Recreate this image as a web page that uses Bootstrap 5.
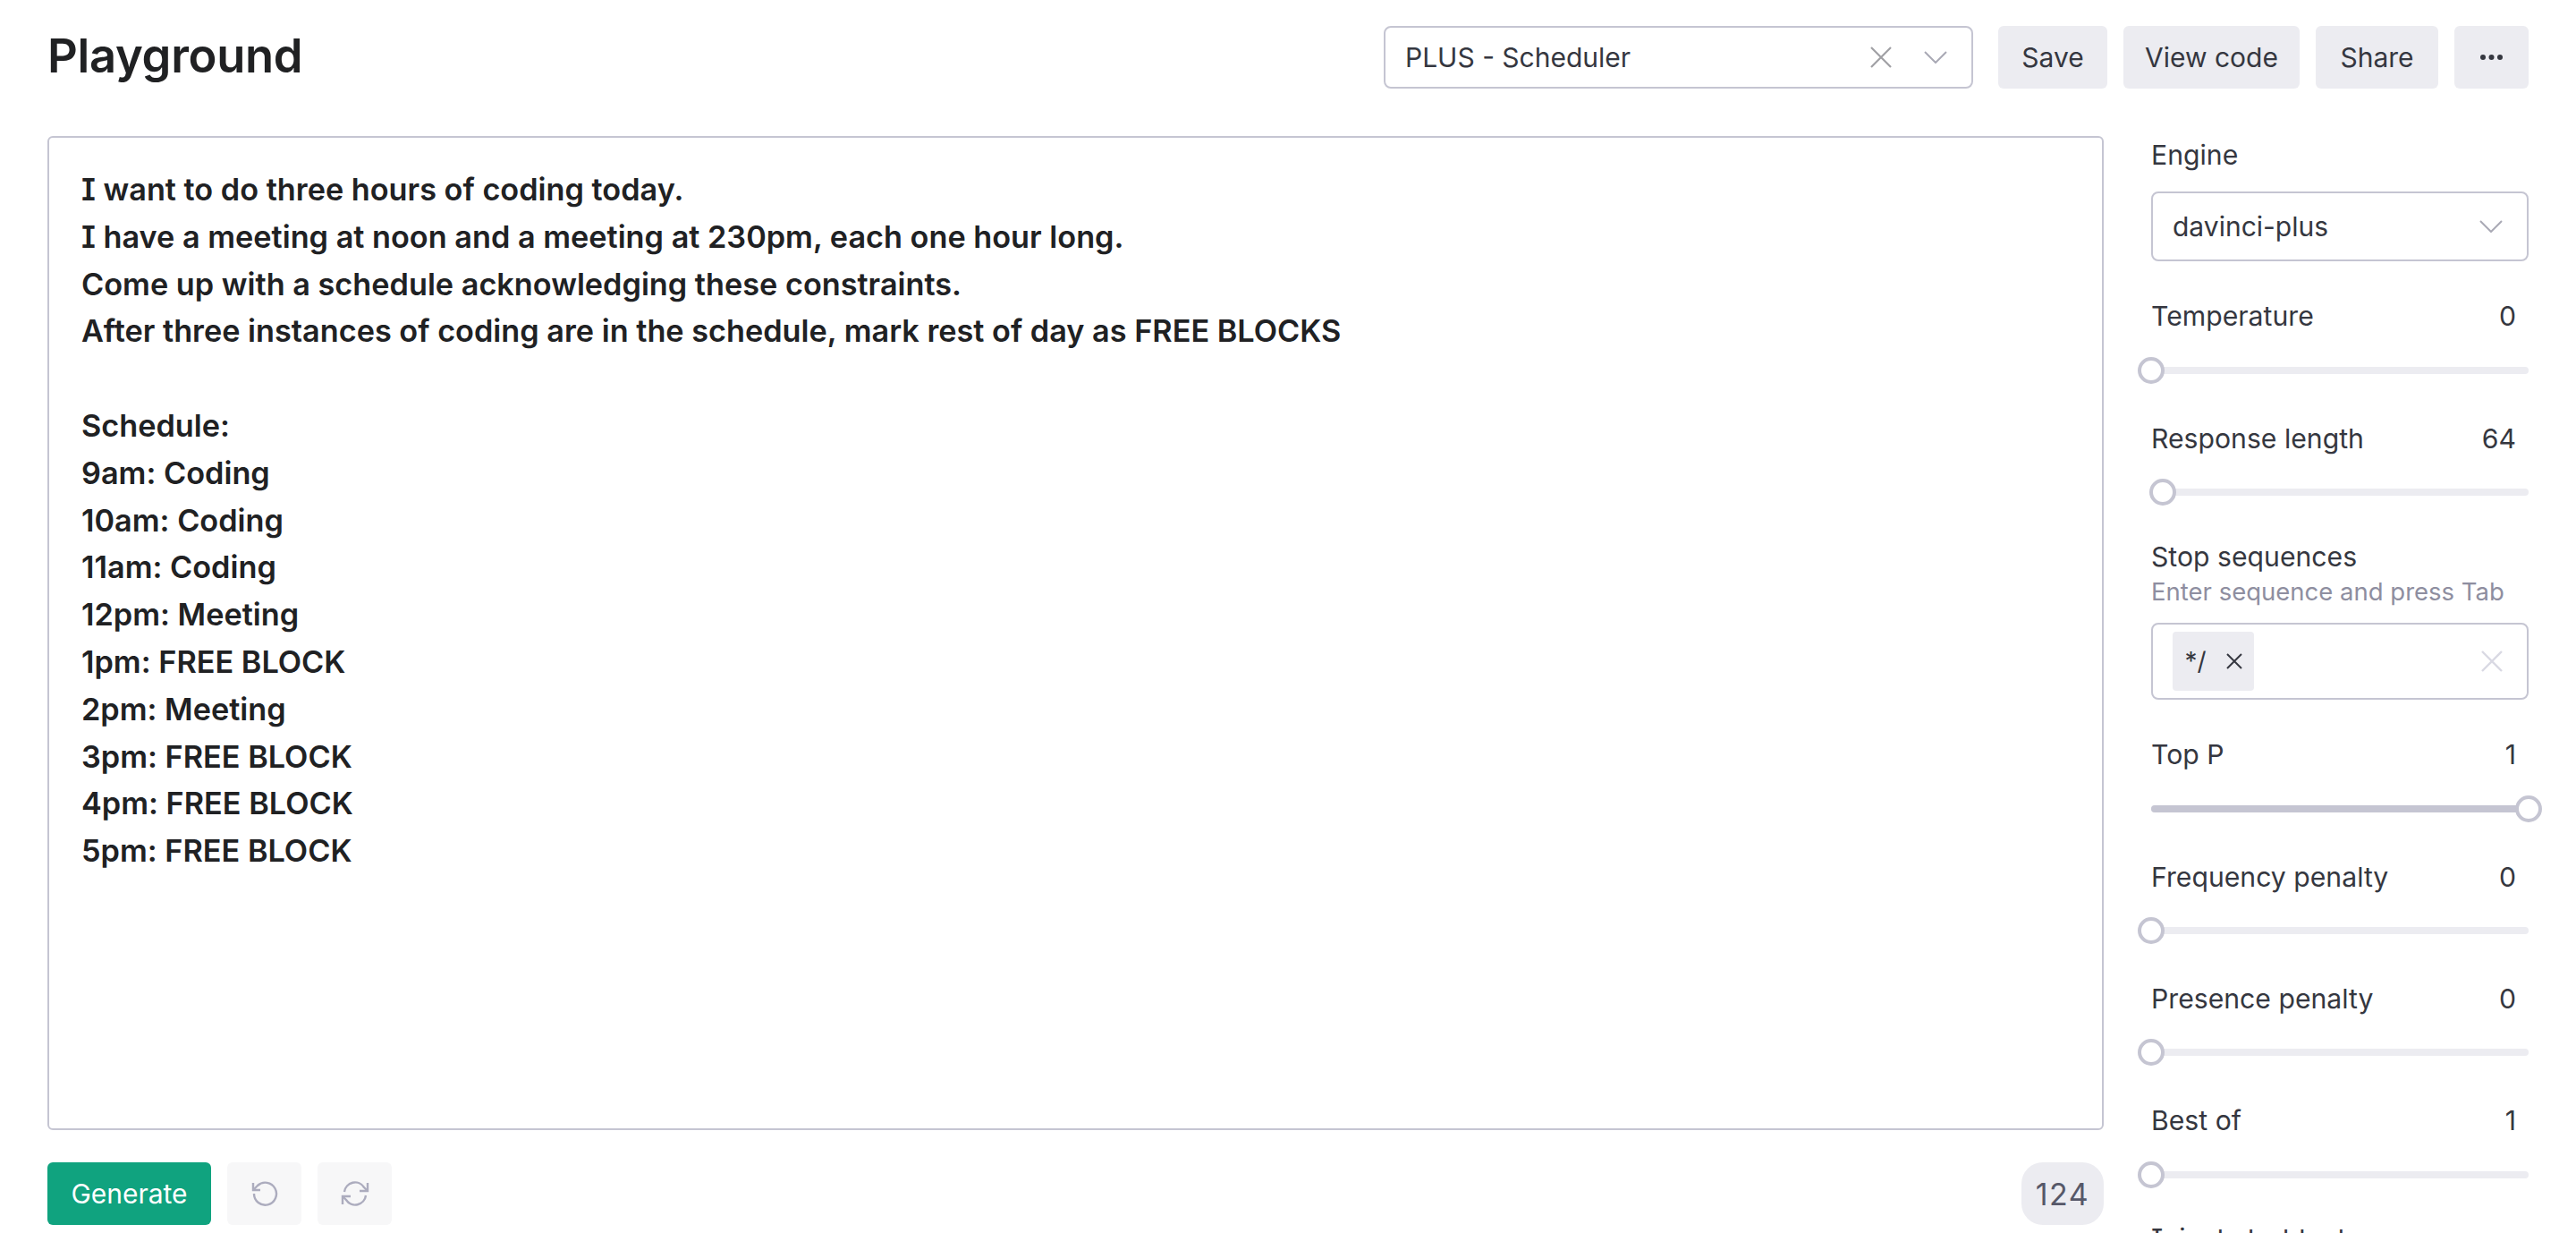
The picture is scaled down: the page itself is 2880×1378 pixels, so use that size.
<!DOCTYPE html>
<html lang="en">
<head>
    <meta charset="UTF-8">
    <meta name="viewport" content="width=device-width, initial-scale=1.0">
    <title>Playground</title>
    <link href="https://cdn.jsdelivr.net/npm/bootstrap@5.3.0/dist/css/bootstrap.min.css" rel="stylesheet">

    <style>
        html, body {
            height: 1378px;
            overflow: hidden;
        }
        body {
            font-family: Inter, "Noto Sans", sans-serif;
            font-feature-settings: "cv08";
            color: #353740;
            background-color: #fff;
        }
        .page-wrap {
            padding: 29px 53px 0 53px;
        }
        .page-title {
            font-size: 52.5px;
            font-weight: 600;
            line-height: 67px;
            margin: 0 0 3px 0;
            color: #202123;
            letter-spacing: -0.3px;
        }
        .head-bar {
            height: 70px;
            margin-bottom: 53px;
        }
        .head-actions {
            gap: 18px;
        }
        .field-box {
            border: 2px solid #c5c5d2;
            border-radius: 8px;
            background: #fff;
            font-size: 30px;
            padding: 0 27px 0 22px;
        }
        .preset-select {
            width: 659px;
            height: 70px;
            margin-right: 10px;
        }
        .preset-icons {
            gap: 36px;
        }
        .grey-btn {
            background: #ececf1;
            color: #353740;
            border: 0;
            border-radius: 6px;
            height: 70px;
            font-size: 30px;
            padding: 0;
        }
        .grey-btn:hover {
            background: #d9d9e3;
        }
        .btn-save { width: 122px; }
        .btn-view { width: 197px; }
        .btn-share { width: 137px; }
        .btn-more { width: 83px; }
        .main-row {
            gap: 53px;
        }
        .left-col {
            width: 2299px;
        }
        .editor-box {
            width: 2299px;
            height: 1111px;
            border: 2px solid #c5c5d2;
            border-radius: 6px;
            padding: 32px 36px;
            font-size: 34.25px;
            font-weight: 600;
            line-height: 52.8px;
            color: #202123;
            white-space: pre-line;
        }
        .foot-bar {
            margin-top: 36px;
            height: 70px;
            gap: 18px;
        }
        .btn-generate {
            background: #10a37f;
            color: #fff;
            border: 0;
            border-radius: 6px;
            width: 183px;
            height: 70px;
            font-size: 30px;
            padding: 0;
        }
        .btn-generate:hover {
            background: #0e8e6f;
            color: #fff;
        }
        .btn-hist {
            background: #f7f7f8;
            border: 0;
            border-radius: 6px;
            width: 83px;
            height: 70px;
            padding: 0;
        }
        .token-pill {
            background: #ececf1;
            color: #565869;
            border-radius: 24px;
            width: 92px;
            height: 70px;
            font-size: 34px;
            letter-spacing: 1.5px;
        }
        .side-col {
            width: 422px;
            font-size: 30.2px;
        }
        .side-label {
            line-height: 40px;
            margin-top: 52px;
        }
        .side-label.engine-label {
            margin-top: 1px;
        }
        .side-label.temp-label {
            margin-top: 41px;
        }
        .side-label.stop-label {
            margin-top: 48px;
        }
        .side-label.topp-label {
            margin-top: 41px;
        }
        .side-label.inject-label {
            margin-top: 47px;
        }
        .side-value {
            padding-right: 14px;
        }
        .engine-select {
            height: 78px;
            margin-top: 21px;
        }
        .slider-track {
            position: relative;
            height: 8px;
            border-radius: 4px;
            background: #ececf1;
            margin-top: 36px;
        }
        .slider-track.track-low {
            margin-top: 37px;
        }
        .slider-fill {
            height: 8px;
            border-radius: 4px;
            background: #c5c5d2;
        }
        .slider-thumb {
            position: absolute;
            top: -11px;
            width: 30px;
            height: 30px;
            margin-left: -15px;
            border: 4px solid #c5c5d2;
            border-radius: 50%;
            background: #fff;
        }
        .hint-text {
            font-size: 27.5px;
            color: #8e8ea0;
            line-height: 32px;
            margin-top: 3px;
        }
        .stop-box {
            height: 86px;
            margin-top: 19px;
        }
        .stop-tag {
            background: #ececf1;
            border-radius: 4px;
            height: 66px;
            width: 91px;
            font-size: 28px;
            gap: 22px;
        }
    </style>
</head>
<body>

<div class="page-wrap">
    <div class="head-bar d-flex align-items-center justify-content-between">
        <h1 class="page-title">Playground</h1>
        <div class="head-actions d-flex align-items-center">
            <div class="field-box preset-select d-flex align-items-center justify-content-between">
                <span>PLUS - Scheduler</span>
                <span class="preset-icons d-flex align-items-center">
                    <svg width="24" height="24" viewBox="0 0 24 24" fill="none" stroke="#a0a0a4" stroke-width="2.2"><path d="M1 1l22 22M23 1L1 23"/></svg>
                    <svg width="26" height="14" viewBox="0 0 26 14" fill="none" stroke="#a9a9b5" stroke-width="2"><path d="M1 1l12 12L25 1"/></svg>
                </span>
            </div>
            <button class="btn grey-btn btn-save">Save</button>
            <button class="btn grey-btn btn-view">View code</button>
            <button class="btn grey-btn btn-share">Share</button>
            <button class="btn grey-btn btn-more d-flex align-items-center justify-content-center">
                <svg width="25" height="8" viewBox="0 0 25 8" fill="#353740"><circle cx="3" cy="4" r="3"/><circle cx="12.5" cy="4" r="3"/><circle cx="22" cy="4" r="3"/></svg>
            </button>
        </div>
    </div>

    <div class="main-row d-flex align-items-start">
        <div class="left-col">
            <div class="editor-box">I want to do three hours of coding today.
I have a meeting at noon and a meeting at 230pm, each one hour long.
Come up with a schedule acknowledging these constraints.
After three instances of coding are in the schedule, mark rest of day as FREE BLOCKS

Schedule:
9am: Coding
10am: Coding
11am: Coding
12pm: Meeting
1pm: FREE BLOCK
2pm: Meeting
3pm: FREE BLOCK
4pm: FREE BLOCK
5pm: FREE BLOCK</div>
            <div class="foot-bar d-flex align-items-center">
                <button class="btn btn-generate">Generate</button>
                <button class="btn btn-hist d-flex align-items-center justify-content-center">
                    <svg width="30" height="28" viewBox="0 0 30 28" fill="none" stroke="#acacbe" stroke-width="2.4"><path d="M3 14A12.5 12.5 0 1 0 7 5L3 9"/><path d="M2 2v8h8"/></svg>
                </button>
                <button class="btn btn-hist d-flex align-items-center justify-content-center">
                    <svg width="32" height="28" viewBox="0 0 32 28" fill="none" stroke="#acacbe" stroke-width="2.4"><path d="M4 12A12 12 0 0 1 26 7l4 4"/><path d="M30 2v9h-9"/><path d="M28 16A12 12 0 0 1 6 21l-4-4"/><path d="M2 26v-9h9"/></svg>
                </button>
                <div class="token-pill d-flex align-items-center justify-content-center ms-auto">124</div>
            </div>
        </div>

        <div class="side-col">
            <div class="side-label engine-label">Engine</div>
            <div class="field-box engine-select d-flex align-items-center justify-content-between">
                <span>davinci-plus</span>
                <svg width="26" height="14" viewBox="0 0 26 14" fill="none" stroke="#a9a9b5" stroke-width="2"><path d="M1 1l12 12L25 1"/></svg>
            </div>

            <div class="side-label temp-label d-flex justify-content-between"><span>Temperature</span><span class="side-value">0</span></div>
            <div class="slider-track track-low"><div class="slider-thumb" style="left:0"></div></div>

            <div class="side-label d-flex justify-content-between"><span>Response length</span><span class="side-value">64</span></div>
            <div class="slider-track"><div class="slider-thumb" style="left:3%"></div></div>

            <div class="side-label stop-label">Stop sequences</div>
            <div class="hint-text">Enter sequence and press Tab</div>
            <div class="field-box stop-box d-flex align-items-center justify-content-between">
                <span class="stop-tag d-flex align-items-center justify-content-center">*/
                    <svg width="18" height="18" viewBox="0 0 18 18" fill="none" stroke="#353740" stroke-width="2"><path d="M1 1l16 16M17 1L1 17"/></svg>
                </span>
                <svg width="24" height="24" viewBox="0 0 24 24" fill="none" stroke="#d9d9e3" stroke-width="2.4"><path d="M1 1l22 22M23 1L1 23"/></svg>
            </div>

            <div class="side-label topp-label d-flex justify-content-between"><span>Top P</span><span class="side-value">1</span></div>
            <div class="slider-track track-low"><div class="slider-fill" style="width:100%"></div><div class="slider-thumb" style="left:100%"></div></div>

            <div class="side-label d-flex justify-content-between"><span>Frequency penalty</span><span class="side-value">0</span></div>
            <div class="slider-track"><div class="slider-thumb" style="left:0"></div></div>

            <div class="side-label d-flex justify-content-between"><span>Presence penalty</span><span class="side-value">0</span></div>
            <div class="slider-track"><div class="slider-thumb" style="left:0"></div></div>

            <div class="side-label d-flex justify-content-between"><span>Best of</span><span class="side-value">1</span></div>
            <div class="slider-track track-low"><div class="slider-thumb" style="left:0"></div></div>

            <div class="side-label inject-label">Inject start text</div>
        </div>
    </div>
</div>

<script src="https://cdn.jsdelivr.net/npm/bootstrap@5.3.0/dist/js/bootstrap.bundle.min.js"></script>
</body>
</html>
